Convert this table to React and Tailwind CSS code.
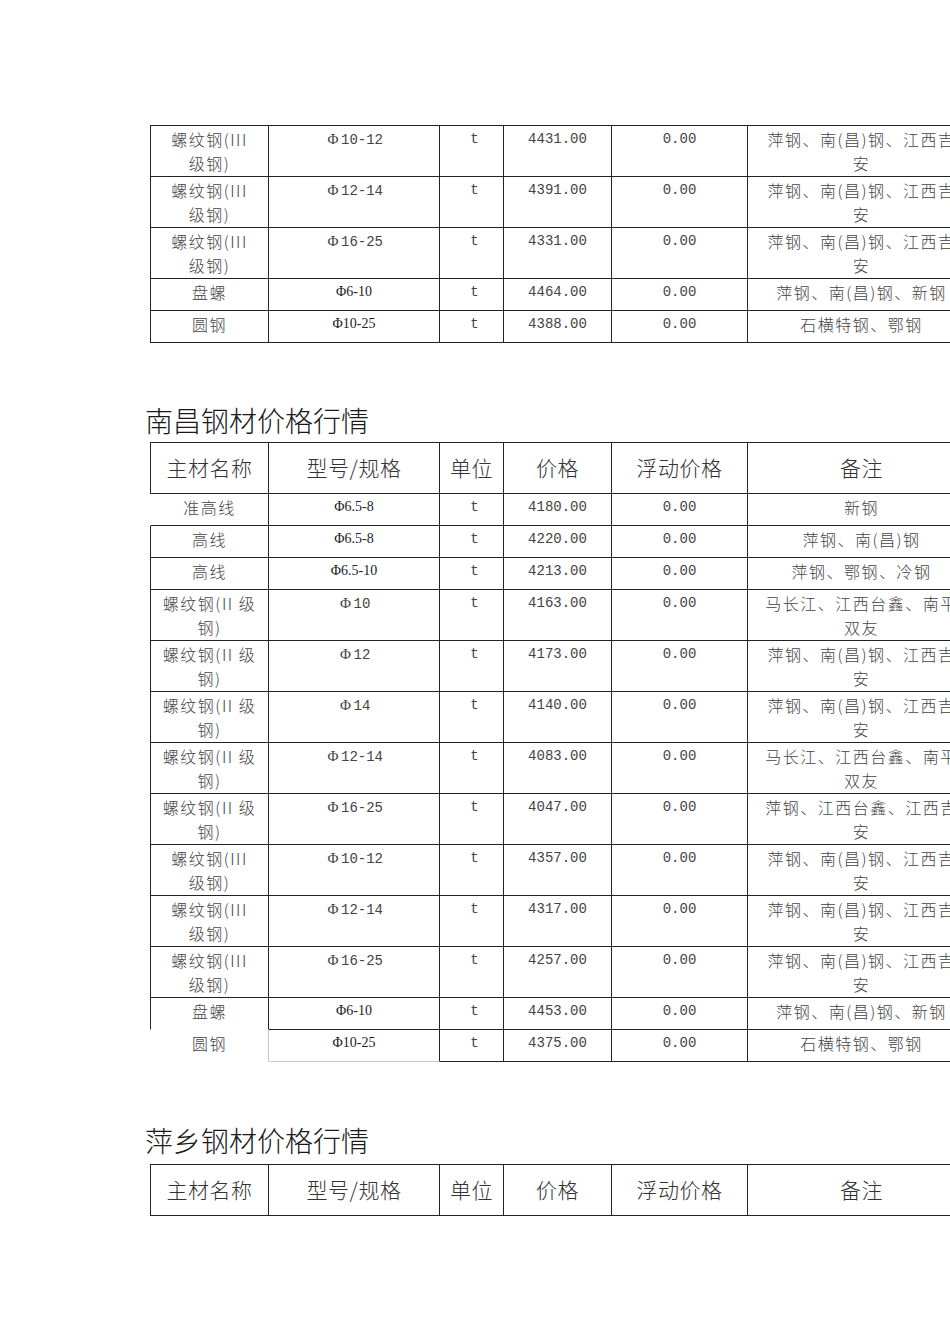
import React from 'react';

function Spec({ spec }) {
  if (spec.kind === 'serif') {
    return (
      <span className="font-['Liberation_Serif',serif] text-[14px] tracking-normal text-[#222]">{spec.text}</span>
    );
  }
  return (
    <span className="inline-flex items-baseline tracking-normal">
      <span className="inline-block w-[16px] text-center font-['Liberation_Serif',serif] text-[15px] text-[#444]">Φ</span>
      <span className="font-['Liberation_Mono',monospace] text-[14px] text-[#444]">{spec.text}</span>
    </span>
  );
}

const base = "flex flex-col items-center pt-[1px] leading-[24px] whitespace-nowrap overflow-hidden text-[#444] text-[16px] font-light tracking-[1.5px] font-['Noto_Sans_CJK_SC',sans-serif]";
const mono = "font-['Liberation_Mono',monospace] text-[14px] font-normal tracking-normal";

function Row({ r, first }) {
  const h = first ? (r.tall ? 'h-[52px]' : 'h-[33px]') : r.tall ? 'h-[51px]' : 'h-[32px]';
  const top = first ? 'border-t border-t-[#222]' : '';
  let c1 = 'border-l border-l-[#222] border-r border-r-[#222] border-b border-b-[#222]';
  let c2 = 'border-r border-r-[#222] border-b border-b-[#222]';
  if (r.v === 'noLeft') c1 = 'border-l border-l-transparent border-r border-r-[#222] border-b border-b-[#222]';
  if (r.v === 'noBottom') c1 = 'border-l border-l-[#222] border-r border-r-[#222] border-b border-b-transparent';
  if (r.v === 'last') {
    c1 = 'border-l border-l-transparent border-r border-r-[#c8c8c8] border-b border-b-transparent';
    c2 = 'border-r border-r-[#222] border-b border-b-[#c8c8c8]';
  }
  const cn = 'border-r border-r-[#222] border-b border-b-[#222]';
  return (
    <>
      <div className={`${base} ${h} ${top} ${c1}`}>
        {r.name.map((l, i) => (
          <span key={i}>{l}</span>
        ))}
      </div>
      <div className={`${base} ${h} ${top} ${c2}`}>
        <Spec spec={r.spec} />
      </div>
      <div className={`${base} ${h} ${top} ${cn} pl-[6px]`}>
        <span className={mono}>t</span>
      </div>
      <div className={`${base} ${h} ${top} ${cn}`}>
        <span className={mono}>{r.price}</span>
      </div>
      <div className={`${base} ${h} ${top} ${cn}`}>
        <span className={mono}>0.00</span>
      </div>
      <div className={`${base} ${h} ${top} ${cn}`}>
        {r.remark.map((l, i) => (
          <span key={i}>{l}</span>
        ))}
      </div>
    </>
  );
}

const headBase = "flex items-center justify-center h-[52px] border-t border-t-[#222] border-r border-r-[#222] border-b border-b-[#222] text-[21px] font-light tracking-[0.5px] text-[#333] whitespace-nowrap font-['Noto_Sans_CJK_SC',sans-serif]";

function Header() {
  const cols = ['主材名称', '型号/规格', '单位', '价格', '浮动价格', '备注'];
  return (
    <>
      {cols.map((c, i) => (
        <div key={c} className={i === 0 ? `${headBase} border-l border-l-[#222]` : headBase}>
          {c}
        </div>
      ))}
    </>
  );
}

const grid = 'grid grid-cols-[119px_171px_64px_108px_136px_228px] w-[826px]';

const m = (t) => ({ kind: 'mono', text: t });
const s = (t) => ({ kind: 'serif', text: t });

const III = ['螺纹钢(III', '级钢)'];
const II = ['螺纹钢(II 级', '钢)'];
const JA = ['萍钢、南(昌)钢、江西吉', '安'];
const MC = ['马长江、江西台鑫、南平', '双友'];

const table1 = [
  { name: III, spec: m('10-12'), price: '4431.00', remark: JA, tall: true },
  { name: III, spec: m('12-14'), price: '4391.00', remark: JA, tall: true },
  { name: III, spec: m('16-25'), price: '4331.00', remark: JA, tall: true },
  { name: ['盘螺'], spec: s('Φ6-10'), price: '4464.00', remark: ['萍钢、南(昌)钢、新钢'] },
  { name: ['圆钢'], spec: s('Φ10-25'), price: '4388.00', remark: ['石横特钢、鄂钢'] },
];

const table2 = [
  { name: ['准高线'], spec: s('Φ6.5-8'), price: '4180.00', remark: ['新钢'], v: 'noLeft' },
  { name: ['高线'], spec: s('Φ6.5-8'), price: '4220.00', remark: ['萍钢、南(昌)钢'] },
  { name: ['高线'], spec: s('Φ6.5-10'), price: '4213.00', remark: ['萍钢、鄂钢、冷钢'] },
  { name: II, spec: m('10'), price: '4163.00', remark: MC, tall: true },
  { name: II, spec: m('12'), price: '4173.00', remark: JA, tall: true },
  { name: II, spec: m('14'), price: '4140.00', remark: JA, tall: true },
  { name: II, spec: m('12-14'), price: '4083.00', remark: MC, tall: true },
  { name: II, spec: m('16-25'), price: '4047.00', remark: ['萍钢、江西台鑫、江西吉', '安'], tall: true },
  { name: III, spec: m('10-12'), price: '4357.00', remark: JA, tall: true },
  { name: III, spec: m('12-14'), price: '4317.00', remark: JA, tall: true },
  { name: III, spec: m('16-25'), price: '4257.00', remark: JA, tall: true },
  { name: ['盘螺'], spec: s('Φ6-10'), price: '4453.00', remark: ['萍钢、南(昌)钢、新钢'], v: 'noBottom' },
  { name: ['圆钢'], spec: s('Φ10-25'), price: '4375.00', remark: ['石横特钢、鄂钢'], v: 'last' },
];

const titleCls = "ml-[-5px] h-[36px] leading-[36px] text-[28px] font-light text-[#1a1a1a] whitespace-nowrap font-['Noto_Sans_CJK_SC',sans-serif]";

export default function App() {
  return (
    <div className="w-[950px] min-h-[1344px] overflow-hidden bg-white">
      <div className="pl-[150px] pt-[125px] flex flex-col">
        <div className={grid}>
          {table1.map((r, i) => (
            <Row key={i} r={r} first={i === 0} />
          ))}
        </div>

        <div className={`${titleCls} mt-[59px] mb-[4px]`}>南昌钢材价格行情</div>
        <div className={grid}>
          <Header />
          {table2.map((r, i) => (
            <Row key={i} r={r} first={false} />
          ))}
        </div>

        <div className={`${titleCls} mt-[60px] mb-[6px]`}>萍乡钢材价格行情</div>
        <div className={grid}>
          <Header />
        </div>
      </div>
    </div>
  );
}
